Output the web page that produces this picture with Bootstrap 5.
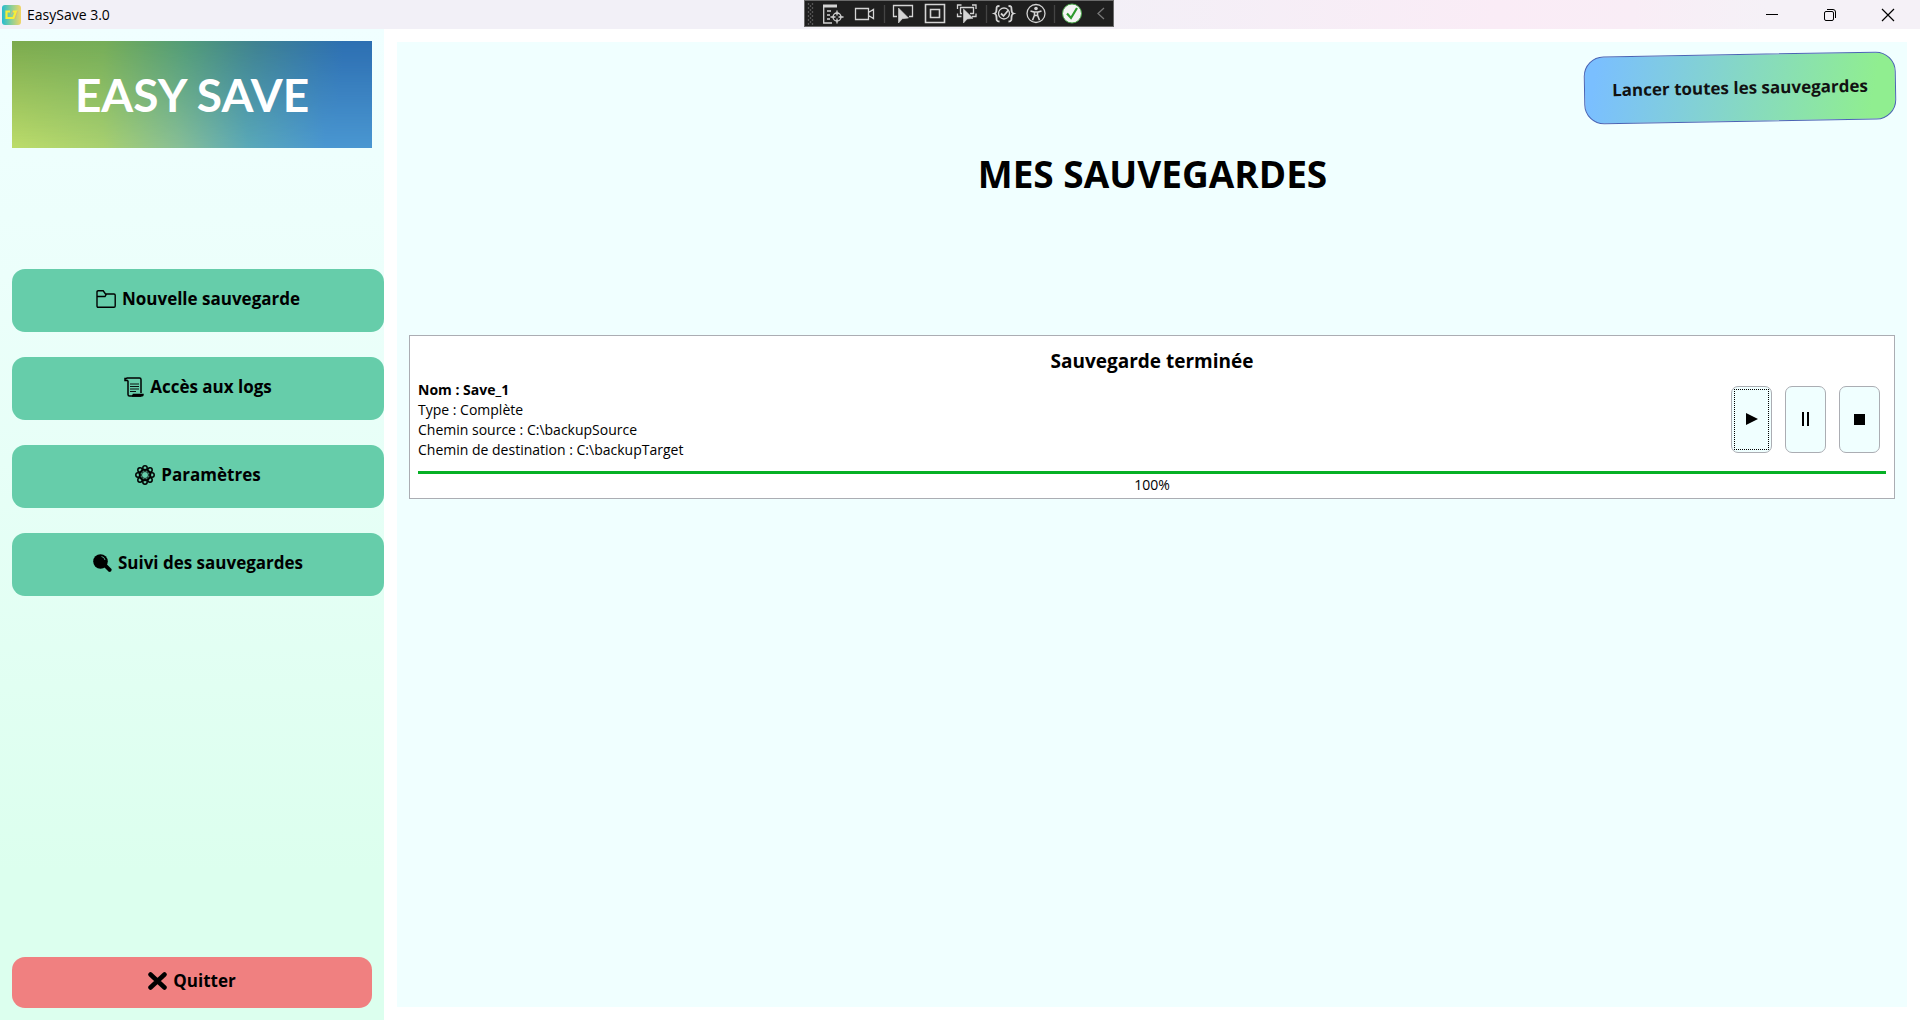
<!DOCTYPE html>
<html lang="fr">
<head>
<meta charset="utf-8">
<meta name="viewport" content="width=device-width, initial-scale=1">
<title>EasySave 3.0</title>
<link href="https://cdn.jsdelivr.net/npm/bootstrap@5.3.0/dist/css/bootstrap.min.css" rel="stylesheet">
<style>
body { font-family: "Open Sans", "Noto Sans", sans-serif; color: #000; background: #fff; font-size: 14px; line-height: 20px; }
.title-bar { height: 29px; padding: 0 3px 0 2px; background: linear-gradient(90deg, #f2f0f7 55%, #faecf6 78%, #f9edf6 85%, #f5f1f7 92%); }
.app-name { font-size: 14px; margin-left: 6px; }
.dev-tools { left: 50%; top: 0; width: 310px; height: 27px; transform: translateX(-50%); margin-left: -1px; background: #1f1f1f; border: 1px solid #6a6a6a; }
.dev-tools svg, .win-btn svg, .icon { display: block; flex: none; }
.win-btn { width: 58px; height: 29px; background: none; border: 0; padding: 0; display: flex; align-items: center; justify-content: center; }
.side { width: 384px; background: linear-gradient(180deg, #f0ffff 0%, #ecfffb 25%, #dcffee 85%, #dcffee 100%); padding: 12px 0 12px 12px; }
.logo { height: 107px; margin-right: 12px; position: relative; isolation: isolate; color: #fff; font-family: Lato, sans-serif; font-weight: 700; font-size: 46px; line-height: 1; background: linear-gradient(95deg, #7cab4e 0%, #75ad58 25%, #529c78 47%, #3f8291 66%, #2d6fb2 90%); }
.logo::before { content: ""; position: absolute; inset: 0; z-index: -1; background: linear-gradient(85deg, #bcdc6a 0%, #a8d070 25%, #88bf96 45%, #5aa9b8 64%, #4a97d1 85%); -webkit-mask-image: linear-gradient(180deg, transparent, #000); mask-image: linear-gradient(180deg, transparent, #000); }
.side-nav { margin-top: 121px; gap: 25px; }
.side-btn { height: 63px; border: 0; border-radius: 13px; background: #66cdaa; color: #000; font-weight: 700; font-size: 17px; line-height: 24px; padding: 0 0 3px; display: flex; align-items: center; justify-content: center; gap: 6px; }
.quit-btn { height: 51px; margin-right: 12px; background: #f08080; }
.board { margin: 13px; background: #f0ffff; padding: 12px 11px 10px 12px; }
.launch { width: 312px; height: 68px; border: 1px solid #4b64b4; border-radius: 20px; background: linear-gradient(100deg, #7abfff 4%, #90ee90 92%); font-weight: 700; font-size: 17px; transform: rotate(-1deg); color: #111; }
.page-title { font-size: 37px; line-height: 48px; font-weight: 700; margin: 28px 0 137px; }
.job { border: 1px solid #abadb3; background: #fff; padding: 13px 8px 3px; margin-right: 1px; }
.job-title { font-size: 19px; line-height: 24px; font-weight: 700; margin: 0 0 7px; }
.job-controls { gap: 13px; padding: 0 6px 2px 0; }
.ctl { width: 41px; height: 67px; border: 1px solid #abadb3; border-radius: 7px; background: #f0ffff; padding: 2px; }
.ctl span { display: flex; width: 100%; height: 100%; align-items: center; justify-content: center; }
.ctl-focus span { border: 1px dotted #000; }
.job .progress { height: 3px; border-radius: 0; margin: 11px 0 1px; }
.job .progress-bar { background: #06b025; }
</style>
</head>
<body class="d-flex flex-column min-vh-100">
<header class="title-bar position-relative d-flex align-items-center">
  <svg class="icon" width="19" height="20" viewBox="0 0 19 20" aria-hidden="true">
    <defs><linearGradient id="ga"><stop offset="0" stop-color="#25bcd0"/><stop offset=".5" stop-color="#8bcf98"/><stop offset="1" stop-color="#f3d565"/></linearGradient></defs>
    <rect width="19" height="20" rx="3" fill="url(#ga)"/><path d="M8 6.500H4.500V13h7l2.500-6.500h-3" fill="none" stroke="#f6ee38" stroke-width="2.200"/><path d="M9 9.500l2-4M15.500 6l-2.500 8" stroke="#e9b06a" stroke-width=".8"/>
  </svg>
  <span class="app-name">EasySave 3.0</span>
  <div class="dev-tools position-absolute">
    <svg width="308" height="25" viewBox="0 0 308 25" fill="none" stroke="#d4d4d4" stroke-width="1.300" aria-hidden="true">
      <g stroke="#555" stroke-dasharray="2 2"><path d="M3.500 2v22M7.500 2v22"/><path d="M5.500 4v20"/></g>
      <path d="M18 3.500h14v3H18z" fill="#d4d4d4" stroke="none"/><path d="M18.700 6v16H27M22 10h4M22 14h3M22 18h3"/><circle cx="32" cy="16" r="4"/><path d="M32 9.500v5M32 17.500v5M25.500 16h5M33.500 16h5"/>
      <path d="M50.500 7.500h13v11h-13zM63.500 11.500l5-3v9l-5-3"/>
      <path d="M79.500 4v18M181.500 4v18M249.500 4v18" stroke="#444"/>
      <path d="M92 15.500h-3.500v-11h19v11H104"/><path d="M93.500 7v15l3.800-4.300 6.200-.7z" fill="#d4d4d4" stroke-width=".6"/>
      <path d="M120.500 3.500h19v18h-19zM125.500 8.500h9v8h-9z" stroke-width="1.600"/>
      <path d="M152.500 8V4h4M167 4h4v4M171 12.500v3h-4M152.500 12.500v3h4M157 12.500h-1.500v-6h13v6H165"/><path d="M158.500 8v14l3.600-4 5.900-.7z" fill="#d4d4d4" stroke-width=".6"/>
      <path d="M194.500 5c-3 0-3 1-3 3.500s-.5 3.500-2 4c1.500.5 2 1.500 2 4s0 4 3 4M203.500 5c3 0 3 1 3 3.500s.5 3.500 2 4c-1.500.5-2 1.500-2 4s0 4-3 4" stroke-width="1.800"/><circle cx="199" cy="12.500" r="5.500"/><path d="M196 12.500l2.500 2.500 5-6" stroke-width="1.800"/>
      <circle cx="231" cy="12.500" r="9"/><circle cx="231" cy="7.500" r="1.800" fill="#d4d4d4" stroke="none"/><path d="M225.500 10l4 1.200v3l-2 5M236.500 10l-4 1.200v3l2 5M229 11h4M229.500 14.500h3" stroke-width="1.600"/>
      <circle cx="267" cy="12.500" r="9.500" fill="#f4f4f4" stroke="#4aa84a" stroke-width="1"/><path d="M262 12.500l4 4.500 6-10" stroke="#2d9a2d" stroke-width="2.200"/>
      <path d="M299 7l-6 5.500 6 5.500" stroke="#777"/>
    </svg>
  </div>
  <div class="ms-auto d-flex">
    <button class="win-btn" type="button" aria-label="Réduire"><svg width="14" height="14" viewBox="0 0 14 14" stroke="#000"><path d="M1 6.500h12"/></svg></button>
    <button class="win-btn" type="button" aria-label="Restaurer"><svg width="14" height="14" viewBox="0 0 14 14" stroke="#000" fill="none"><rect x="1.500" y="3.500" width="9" height="9" rx="1.500"/><path d="M4 1.500h6q2.500 0 2.500 2.500v6"/></svg></button>
    <button class="win-btn" type="button" aria-label="Fermer"><svg width="14" height="14" viewBox="0 0 14 14" stroke="#000" stroke-width="1.200"><path d="M1 1l12 12M13 1 1 13"/></svg></button>
  </div>
</header>
<div class="d-flex flex-grow-1">
  <aside class="side d-flex flex-column flex-shrink-0">
    <div class="logo d-flex align-items-center justify-content-center">EASY SAVE</div>
    <nav class="side-nav d-flex flex-column">
      <button class="side-btn" type="button"><svg class="icon" width="20" height="18" viewBox="0 0 20 18" fill="none" stroke="#000" stroke-width="1.400"><path d="M1 2q0-1.200 1.200-1.200h5L9.500 4H18q1.200 0 1.200 1.200V16q0 1.200-1.200 1.200H2.200Q1 17.200 1 16zM1 6.500h8L10.500 4"/></svg>Nouvelle sauvegarde</button>
      <button class="side-btn" type="button"><svg class="icon" width="20" height="20" viewBox="0 0 20 20" fill="none" stroke="#000" stroke-width="1.500"><path d="M4 3.500V17.500q0 1.500 1.500 1.500H17M17 16V2.500Q17 1 15.500 1H2.500M4 3.500H1V1.500h2"/><path d="M8 18.500q1.500 0 1.500-1h9.500q0 1.500-2 1.500H8" fill="#000"/><path d="M6 7h9M6 9.500h9M6 12h9M6 14.500h6" stroke-width=".9"/></svg>Accès aux logs</button>
      <button class="side-btn" type="button"><svg class="icon" width="20" height="20" viewBox="0 0 20 20" fill="none" stroke="#000" stroke-width="1.500"><circle cx="10" cy="10" r="5.500"/><circle cx="10" cy="10" r="3.500" stroke-width=".8"/><g><circle cx="10" cy="3" r="2.200"/><circle cx="10" cy="17" r="2.200"/><circle cx="3" cy="10" r="2.200"/><circle cx="17" cy="10" r="2.200"/><circle cx="5" cy="5" r="2.200"/><circle cx="15" cy="5" r="2.200"/><circle cx="5" cy="15" r="2.200"/><circle cx="15" cy="15" r="2.200"/></g></svg>Paramètres</button>
      <button class="side-btn" type="button"><svg class="icon" width="19" height="19" viewBox="0 0 19 19"><circle cx="7.500" cy="7.500" r="7.300"/><path d="M10 12l3-2.500 5.500 5.500q.8 3-2.500 3z"/><path d="M8.500 2.500q3 .5 3.500 3.500" stroke="#66cdaa" stroke-width=".8" fill="none"/></svg>Suivi des sauvegardes</button>
    </nav>
    <button class="side-btn quit-btn mt-auto" type="button"><svg class="icon" width="19" height="18" viewBox="0 0 19 18" stroke="#000" stroke-width="4.500" stroke-linecap="round"><path d="M2.500 2.500l14 13M16.500 2.500l-14 13"/></svg>Quitter</button>
  </aside>
  <main class="board flex-grow-1">
    <div class="d-flex justify-content-end"><button class="launch" type="button">Lancer toutes les sauvegardes</button></div>
    <h1 class="page-title text-center">MES SAUVEGARDES</h1>
    <section class="job">
      <h2 class="job-title text-center">Sauvegarde terminée</h2>
      <div class="d-flex justify-content-between">
        <div><div class="fw-bold">Nom : Save_1</div><div>Type : Complète</div><div>Chemin source : C:\backupSource</div><div>Chemin de destination : C:\backupTarget</div></div>
        <div class="job-controls d-flex align-items-center">
          <button class="ctl ctl-focus" type="button" aria-label="Lancer"><span><svg width="12" height="12"><path d="M0 0l12 6-12 6z"/></svg></span></button>
          <button class="ctl" type="button" aria-label="Pause"><span><svg width="8" height="14"><path d="M0 0h2v14H0zM5 0h2v14H5z"/></svg></span></button>
          <button class="ctl" type="button" aria-label="Arrêter"><span><svg width="11" height="11"><path d="M0 0h11v11H0z"/></svg></span></button>
        </div>
      </div>
      <div class="progress" role="progressbar" aria-label="Progression" aria-valuenow="100" aria-valuemin="0" aria-valuemax="100"><div class="progress-bar" style="width:100%"></div></div>
      <div class="text-center">100%</div>
    </section>
  </main>
</div>
<script src="https://cdn.jsdelivr.net/npm/bootstrap@5.3.0/dist/js/bootstrap.bundle.min.js"></script>
</body>
</html>
